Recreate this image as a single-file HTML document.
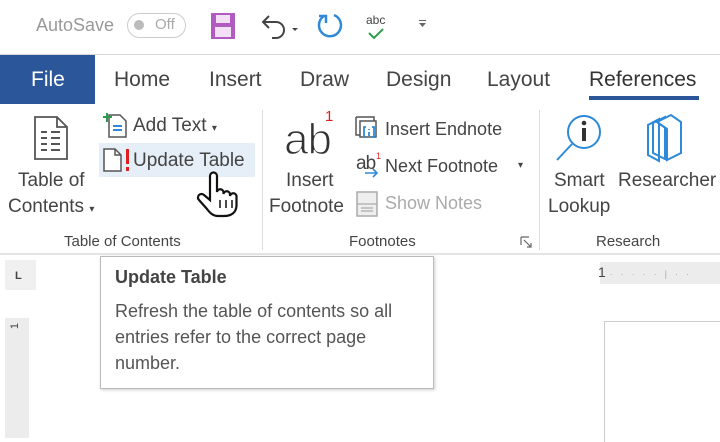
<!DOCTYPE html>
<html><head><style>
body{margin:0;width:720px;height:438px;background:#fff;position:relative;overflow:hidden;font-family:"Liberation Sans",sans-serif;color:#333}
.a{position:absolute;white-space:nowrap}
.t{font-size:19px;color:#444}
.r{font-size:18px;color:#444}
.g{font-size:15px;color:#444}
</style></head><body>
<div class="a" style="left:36px;top:15px;font-size:18px;color:#999">AutoSave</div>
<div class="a" style="left:127px;top:13px;width:57px;height:23px;border:1.5px solid #ccc;border-radius:13px"></div>
<div class="a" style="left:134px;top:20px;width:10px;height:10px;border-radius:50%;background:#bbb"></div>
<div class="a" style="left:155px;top:16px;font-size:15px;color:#aaa">Off</div>
<svg class="a" style="left:210px;top:12px" width="26" height="28"><rect x="1" y="1" width="24" height="26" fill="#b15bc0"/><rect x="6" y="3" width="14" height="8" fill="#f3e0f6"/><rect x="5" y="15" width="16" height="10" fill="#f3e0f6"/></svg>
<svg class="a" style="left:258px;top:12px" width="44" height="30"><path d="M6 10 H18 a8 8 0 0 1 0 16 H14" fill="none" stroke="#444" stroke-width="2"/><path d="M11 4 L5 10 L11 16" fill="none" stroke="#444" stroke-width="2"/><path d="M34 16 l3 3 l3-3z" fill="#444"/></svg>
<svg class="a" style="left:314px;top:10px" width="32" height="32"><path d="M10 6 A11 11 0 1 0 20 5" fill="none" stroke="#2e8ad8" stroke-width="2.5"/><path d="M5 6 h7 v7" fill="none" stroke="#2e8ad8" stroke-width="2.5"/></svg>
<div class="a" style="left:366px;top:13px;font-size:12px;color:#444">abc</div>
<svg class="a" style="left:368px;top:28px" width="20" height="12"><path d="M1 5 l5 5 l9-9" fill="none" stroke="#2a9d4a" stroke-width="2"/></svg>
<div class="a" style="left:419px;top:20px;width:7px;height:1px;background:#666"></div>
<svg class="a" style="left:419px;top:23px" width="8" height="6"><path d="M0 0h7l-3.5 4z" fill="#666"/></svg>
<div class="a" style="left:0;top:54px;width:720px;height:1px;background:#d6d6d6"></div>
<div class="a" style="left:0;top:55px;width:95px;height:49px;background:#2b579a"></div>
<div class="a" style="left:31px;top:68px;font-size:21px;color:#fff">File</div>
<div class="a" style="left:114px;top:68px;font-size:21px;color:#444">Home</div>
<div class="a" style="left:209px;top:68px;font-size:21px;color:#444">Insert</div>
<div class="a" style="left:300px;top:68px;font-size:21px;color:#444">Draw</div>
<div class="a" style="left:386px;top:68px;font-size:21px;color:#444">Design</div>
<div class="a" style="left:487px;top:68px;font-size:21px;color:#444">Layout</div>
<div class="a" style="left:589px;top:68px;font-size:21px;color:#333">References</div>
<div class="a" style="left:589px;top:96px;width:110px;height:4px;background:#2b579a"></div>
<svg class="a" style="left:33px;top:115px" width="36" height="46"><path d="M2 2 H24 L34 12 V44 H2 Z" fill="#fff" stroke="#555" stroke-width="1.8"/><path d="M24 2 V12 H34" fill="none" stroke="#555" stroke-width="1.8"/><g stroke="#555" stroke-width="2"><path d="M8 17h6M18 17h9M8 23h6M18 23h9M8 29h6M18 29h9M8 35h6M18 35h9"/></g></svg>
<div class="a t" style="left:18px;top:170px">Table of</div>
<div class="a t" style="left:8px;top:196px">Contents <span style="font-size:10px">▾</span></div>
<svg class="a" style="left:102px;top:112px" width="26" height="26"><path d="M7 3 H18 L24 9 V25 H7Z" fill="#fff" stroke="#555" stroke-width="1.5"/><path d="M5 1v9M1 5h9" stroke="#2a9d4a" stroke-width="2"/><path d="M11 14h9M11 18h9" stroke="#2e8ad8" stroke-width="2"/></svg>
<div class="a t" style="left:133px;top:115px">Add Text <span style="font-size:10px">▾</span></div>
<div class="a" style="left:99px;top:143px;width:156px;height:34px;background:#e6eef7"></div>
<svg class="a" style="left:102px;top:147px" width="30" height="26"><path d="M2 2 H13 L19 8 V24 H2Z" fill="#fff" stroke="#555" stroke-width="1.5"/><path d="M13 2v6h6" fill="none" stroke="#555" stroke-width="1.5"/><rect x="24" y="2" width="3" height="15" fill="#e02020"/><rect x="24" y="20" width="3" height="4" fill="#e02020"/></svg>
<div class="a t" style="left:133px;top:150px">Update Table</div>
<svg class="a" style="left:196px;top:170px" width="46" height="50"><path d="M14 6 a3.5 3.5 0 0 1 7 0 V22 a3.3 3.3 0 0 1 6.5 0 V24 a3.3 3.3 0 0 1 6.5 0 V26 a3.3 3.3 0 0 1 6.5 0 V36 C40 42 36 46 28 46 H22 C17 46 14 43 11 39 L3 30 a3.5 3.5 0 0 1 5-5 L14 30Z" fill="#fff" stroke="#111" stroke-width="2.2"/><path d="M24 30v8M30 30v8M36 30v8" stroke="#111" stroke-width="1.5"/></svg>
<div class="a g" style="left:64px;top:233px">Table of Contents</div>
<div class="a" style="left:262px;top:110px;width:1px;height:140px;background:#ddd"></div>
<svg class="a" style="left:282px;top:110px" width="52" height="50"><text x="2" y="44" font-family="Liberation Sans" font-size="44" fill="#333" stroke="#fff" stroke-width="1.3" letter-spacing="-1">ab</text></svg>
<div class="a" style="left:325px;top:108px;font-size:15px;color:#e02020">1</div>
<div class="a t" style="left:286px;top:170px">Insert</div>
<div class="a t" style="left:269px;top:196px">Footnote</div>
<svg class="a" style="left:354px;top:115px" width="28" height="28"><path d="M2 2h18v4M2 2v18h4" fill="none" stroke="#555" stroke-width="1.5"/><path d="M6 6h16v16H6z" fill="#fff" stroke="#555" stroke-width="1.5"/><path d="M12 12h-2v10h2M18 12h2v10h-2M15 14v1M15 17v4" stroke="#2e8ad8" stroke-width="1.8" fill="none"/></svg>
<div class="a r" style="left:385px;top:119px">Insert Endnote</div>
<div class="a" style="left:356px;top:153px;font-size:19px;color:#444;letter-spacing:-1px">ab</div>
<div class="a" style="left:376px;top:151px;font-size:9px;color:#e02020">1</div>
<svg class="a" style="left:364px;top:166px" width="16" height="14"><path d="M1 7h12M9 3l4 4-4 4" fill="none" stroke="#2e8ad8" stroke-width="1.6"/></svg>
<div class="a r" style="left:385px;top:156px">Next Footnote</div>
<div class="a" style="left:518px;top:160px;font-size:10px;color:#444">▾</div>
<svg class="a" style="left:356px;top:191px" width="22" height="26"><rect x="1" y="1" width="20" height="24" fill="#eee" stroke="#aaa" stroke-width="1.5"/><path d="M1 13h20M5 17h12M5 20h12" stroke="#aaa" stroke-width="1.3"/></svg>
<div class="a r" style="left:385px;top:193px;color:#aaa">Show Notes</div>
<div class="a g" style="left:349px;top:233px">Footnotes</div>
<svg class="a" style="left:520px;top:236px" width="12" height="12"><path d="M1 1h8M1 1v8M4 4l7 7M7 11h4V7" fill="none" stroke="#666" stroke-width="1.2"/></svg>
<div class="a" style="left:539px;top:110px;width:1px;height:140px;background:#ddd"></div>
<svg class="a" style="left:555px;top:112px" width="52" height="52"><circle cx="29" cy="20" r="16" fill="none" stroke="#2e8ad8" stroke-width="2"/><path d="M17 32L2 48" stroke="#2e8ad8" stroke-width="2"/><rect x="27" y="16" width="4" height="13" fill="#333"/><circle cx="29" cy="11" r="2.3" fill="#333"/></svg>
<div class="a t" style="left:554px;top:170px">Smart</div>
<div class="a t" style="left:548px;top:196px">Lookup</div>
<svg class="a" style="left:645px;top:113px" width="40" height="50"><path d="M3 12L14 6V48L3 42Z M8 10L20 4V46L8 40Z" fill="none" stroke="#2e8ad8" stroke-width="2"/><path d="M12 9L26 2L36 9V40L22 47V16Z" fill="#fff" stroke="#2e8ad8" stroke-width="2"/><path d="M12 9L22 16" stroke="#2e8ad8" stroke-width="2"/></svg>
<div class="a t" style="left:618px;top:170px">Researcher</div>
<div class="a g" style="left:596px;top:233px">Research</div>
<div class="a" style="left:0;top:253px;width:720px;height:2px;background:#e4e4e4"></div>
<div class="a" style="left:5px;top:260px;width:31px;height:30px;background:#f0f0f0"></div>
<div class="a" style="left:15px;top:270px;font-size:11px;font-weight:bold;color:#444">L</div>
<div class="a" style="left:5px;top:318px;width:24px;height:120px;background:#ececec"></div>
<div class="a" style="left:12px;top:320px;font-size:11px;color:#444;transform:rotate(-90deg)">1</div>
<div class="a" style="left:600px;top:262px;width:120px;height:22px;background:#ececec"></div>
<div class="a" style="left:598px;top:264px;font-size:14px;color:#444">1 <span style="color:#aaa;font-size:9px;letter-spacing:8px">·····|··</span></div>
<div class="a" style="left:604px;top:321px;width:116px;height:120px;border-left:1.5px solid #ccc;border-top:1.5px solid #ccc"></div>
<div class="a" style="left:100px;top:256px;width:332px;height:131px;background:#fff;border:1px solid #bbb;box-shadow:1px 1px 3px rgba(0,0,0,.2)"></div>
<div class="a" style="left:115px;top:267px;font-size:18px;font-weight:bold;color:#444">Update Table</div>
<div class="a" style="left:115px;top:298px;font-size:18px;color:#555;line-height:26px">Refresh the table of contents so all<br>entries refer to the correct page<br>number.</div>
</body></html>
